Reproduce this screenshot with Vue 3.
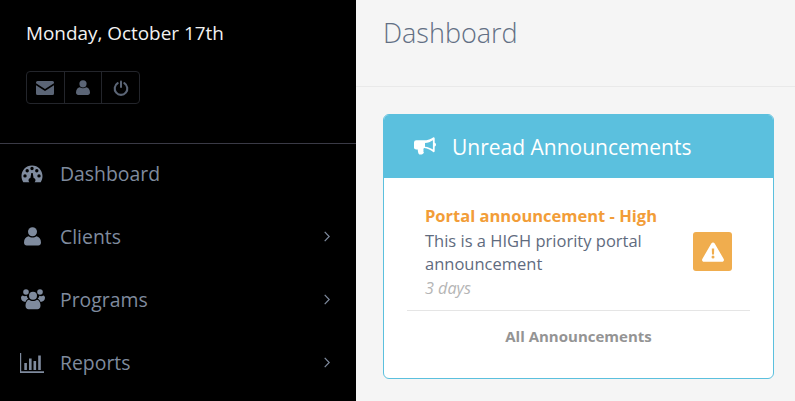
<script setup>
const nav = [
  { label: 'Dashboard', icon: 'gauge', arrow: false },
  { label: 'Clients', icon: 'user', arrow: true },
  { label: 'Programs', icon: 'users', arrow: true },
  { label: 'Reports', icon: 'chart', arrow: true },
]
</script>

<template>
  <div class="layout">
    <aside class="sidebar">
      <div class="profile">
        <div class="date">Monday, October 17th</div>
        <div class="btn-group">
          <button class="tool">
            <svg width="18" height="14" viewBox="0 0 18 14"><path d="M1.500 0h15A1.500 1.500 0 0 1 18 1.500v.8L9 8 0 2.300v-.8A1.500 1.500 0 0 1 1.500 0z"/><path d="M0 4.200 9 10l9-5.800v8.300a1.500 1.500 0 0 1-1.500 1.500h-15A1.500 1.500 0 0 1 0 12.500z"/></svg>
          </button>
          <button class="tool">
            <svg width="14" height="15" viewBox="0 0 14 15"><circle cx="7" cy="3.800" r="3.600"/><path d="M0 12.500C0 9.500 1.800 7.600 3.800 7.300 5.500 8.500 8.500 8.500 10.200 7.300 12.200 7.600 14 9.500 14 12.500 14 14 13 15 11.800 15H2.200C1 15 0 14 0 12.500z"/></svg>
          </button>
          <button class="tool">
            <svg width="16" height="16" viewBox="0 0 16 16"><path d="M4.700 3.200a6.300 6.300 0 1 0 6.600 0" fill="none" stroke-width="2.100" stroke-linecap="round" class="ring"/><rect x="7" y="0.500" width="2" height="7.500" rx="1"/></svg>
          </button>
        </div>
      </div>

      <nav class="menu">
        <a v-for="item in nav" :key="item.label" class="menu-item">
          <span class="menu-icon">
            <svg v-if="item.icon === 'gauge'" class="icon-gauge" width="22" height="18" viewBox="0 0 22 18">
              <path fill-rule="evenodd" d="M11 0.500C5 0.500 0.500 5.200 0.500 11c0 2.300.6 4.300 1.800 6.200h6.200c-.8-.6-1.100-1.500-.9-2.400.2-.9.9-1.500 1.800-1.700L10.300 8h1.400l.9 5.100c.9.200 1.600.8 1.800 1.700.2.900-.1 1.800-.9 2.400h6.200c1.200-1.900 1.800-3.900 1.800-6.200C21.500 5.200 17 .5 11 .5zM4 12.600a1.700 1.700 0 1 1 0-3.400 1.700 1.700 0 0 1 0 3.400zm2.200-5.200a1.700 1.700 0 1 1 0-3.400 1.700 1.700 0 0 1 0 3.400zM11 5.200a1.700 1.700 0 1 1 0-3.400 1.700 1.700 0 0 1 0 3.400zm4.800 2.200a1.700 1.700 0 1 1 0-3.400 1.700 1.700 0 0 1 0 3.400zm2.200 5.200a1.700 1.700 0 1 1 0-3.400 1.700 1.700 0 0 1 0 3.400z"/>
            </svg>
            <svg v-else-if="item.icon === 'user'" width="17" height="19" viewBox="0 0 17 19" class="icon-user">
              <circle cx="8.500" cy="4.700" r="4.500"/>
              <path d="M0 15.500C0 12 2 9.700 4.500 9.300c2.200 1.600 5.800 1.600 8 0C15 9.700 17 12 17 15.500 17 17.500 15.800 18.500 14.300 18.500H2.700C1.200 18.500 0 17.500 0 15.500z"/>
            </svg>
            <svg v-else-if="item.icon === 'users'" class="icon-users" width="24" height="21" viewBox="0 0 24 21">
              <circle cx="5" cy="3" r="2.800"/><circle cx="19" cy="3" r="2.800"/>
              <circle cx="12" cy="6.800" r="4"/>
              <path d="M0 8.800c0-1.500.8-2.400 1.700-2.400 1 .8 2.600 1 3.900.4.300 1.200.9 2.200 1.700 3-1.300.6-2.400 1.700-2.900 3.200C2 12.800 0 11.500 0 8.800z"/>
              <path d="M24 8.800c0-1.500-.8-2.400-1.700-2.400-1 .8-2.600 1-3.900.4-.3 1.200-.9 2.200-1.700 3 1.300.6 2.400 1.700 2.900 3.200 2.400-.2 4.400-1.500 4.400-4.200z"/>
              <path d="M4.500 16.500c0-3 1.500-5.500 3.500-5.800 2.200 1.800 5.800 1.800 8 0 2 .3 3.500 2.800 3.500 5.800 0 2.500-1.400 3.800-3 3.800H7.500c-1.600 0-3-1.300-3-3.800z"/>
            </svg>
            <svg v-else width="24" height="20" viewBox="0 0 24 20">
              <path d="M0 0h1.200v18.300H24V20H0z"/>
              <rect x="4.300" y="10" width="2.600" height="7"/>
              <rect x="9" y="5.500" width="2.600" height="11.500"/>
              <rect x="13.500" y="8" width="2.600" height="9"/>
              <rect x="18.200" y="2.500" width="2.600" height="14.500"/>
            </svg>
          </span>
          <span class="menu-label">{{ item.label }}</span>
          <svg v-if="item.arrow" class="chevron" width="6" height="11" viewBox="0 0 6 11"><path d="M.7.8 5.200 5.500.7 10.200" fill="none" stroke-width="1.200"/></svg>
        </a>
      </nav>
    </aside>

    <main class="content">
      <header class="page-header">
        <h1>Dashboard</h1>
      </header>
      <div class="page-body">
        <section class="panel">
          <div class="panel-heading">
            <svg width="22" height="19" viewBox="0 0 22 19">
              <path fill-rule="evenodd" d="M19.500 0.200c.8 0 1.200.7 1.200 1.300v4.300c.8.400 1.300 1.100 1.300 1.900s-.5 1.500-1.300 1.900v4.400c0 .8-.6 1.300-1.200 1.300-2.500-2.300-5.800-3.900-9.300-4.300-.8.300-1 1.400-.6 2.200-.5.800-.2 1.400.3 2.200-.4 1-1.300 1.700-2.300 2-.9.300-2.400.3-2.900-.4-.5-1.300-1-2.800-1-4.500H2.200A2.200 2.200 0 0 1 0 10V5.500a2.200 2.200 0 0 1 2.200-2.200h7.300c4 0 7.500-1 10-3.100zM18.900 3.200c-2.300 1.700-5 2.500-7.900 2.800v3.800c2.900.3 5.600 1.100 7.900 2.800z"/>
            </svg>
            <span>Unread Announcements</span>
          </div>
          <div class="panel-body">
            <div class="notice">
              <div class="notice-text">
                <div class="notice-title">Portal announcement - High</div>
                <div class="notice-msg">This is a HIGH priority portal announcement</div>
                <div class="notice-time">3 days</div>
              </div>
              <div class="notice-badge">
                <svg width="22" height="20" viewBox="0 0 22 20">
                  <path fill-rule="evenodd" d="M11 0.500c.7 0 1.300.4 1.700 1l9 15.500c.7 1.300-.2 2.800-1.700 2.800H2c-1.500 0-2.400-1.500-1.700-2.800l9-15.500c.4-.6 1-1 1.700-1zM9.800 6.500l.2 6h2l.2-6zM11 13.600a1.500 1.500 0 1 0 0 3 1.500 1.500 0 0 0 0-3z"/>
                </svg>
              </div>
            </div>
            <div class="all-link">All Announcements</div>
          </div>
        </section>
      </div>
    </main>
  </div>
</template>

<style scoped>
.layout {
  display: flex;
  width: 795px;
  height: 401px;
  overflow: hidden;
  font-family: "Open Sans", "Liberation Sans", sans-serif;
}
.sidebar {
  width: 356px;
  flex: none;
  background: #000;
}
.profile {
  padding: 21px 26px 0;
  box-sizing: border-box;
  border-bottom: 1px solid #3a3a46;
  height: 144px;
}
.date {
  color: #f2f2f2;
  font-size: 18.9px;
  line-height: 25px;
}
.btn-group {
  display: inline-flex;
  width: 114px;
  margin-top: 25px;
  height: 33px;
  box-sizing: border-box;
  border: 1px solid #23252b;
  border-radius: 4px;
}
.tool {
  flex: 1;
  padding: 0;
  background: none;
  border: 0;
  border-left: 1px solid #23252b;
  display: flex;
  align-items: center;
  justify-content: center;
}
.tool:first-child { border-left: 0; }
.tool svg { fill: #5b6576; stroke: #5b6576; stroke-width: 0; }
.tool svg .ring { stroke-width: 2.1; fill: none; }
.menu {
  display: flex;
  flex-direction: column;
  margin-top: -2px;
}
.menu-item {
  display: flex;
  align-items: center;
  height: 63px;
  padding: 0 26px 0 20px;
  color: #7f8b9e;
  font-size: 19.4px;
}
.menu-icon {
  width: 40px;
  flex: none;
  display: flex;
  align-items: center;
}
.menu-icon svg { fill: #7f8b9e; }
.menu-icon .icon-gauge { margin-left: 1px; }
.menu-icon .icon-user { margin-left: 3.500px; }
.menu-icon .icon-users { margin-left: 0.500px; }
.menu-label { flex: 1; }
.chevron { stroke: #7f8b9e; }
.content {
  flex: 1;
  background: #f5f5f5;
}
.page-header {
  height: 87px;
  box-sizing: border-box;
  border-bottom: 1px solid #e9e9e9;
  padding: 13px 27px 0;
}
.page-header h1 {
  margin: 0;
  font-size: 27px;
  font-weight: 300;
  line-height: 40px;
  color: #626f84;
}
.page-body {
  padding: 27px 21px 0 27px;
}
.panel {
  height: 265px;
  box-sizing: border-box;
  border: 1px solid #5bc0de;
  border-radius: 6px;
  background: #fff;
  overflow: hidden;
}
.panel-heading {
  height: 63px;
  background: #5bc0de;
  display: flex;
  align-items: center;
  padding-left: 30px;
  color: #fff;
  font-size: 21px;
}
.panel-heading svg { fill: #fff; margin-right: 16px; }
.panel-body {
  padding: 25px 23px 0;
}
.notice {
  display: flex;
  align-items: center;
  padding: 0 18px 10px;
  border-bottom: 1px solid #e5e5e5;
}
.notice-text { flex: 1; }
.notice-title {
  color: #f29d38;
  font-size: 16.5px;
  font-weight: 700;
  line-height: 25px;
  margin-bottom: 1px;
}
.notice-msg {
  color: #5f6b7e;
  font-size: 16.5px;
  line-height: 23px;
  width: 240px;
}
.notice-time {
  color: #b5b5b5;
  font-size: 16.2px;
  font-style: italic;
  line-height: 23px;
  margin-top: 2px;
}
.notice-badge {
  width: 39px;
  height: 39px;
  flex: none;
  background: #f0ad4e;
  border-radius: 3px;
  display: flex;
  align-items: center;
  justify-content: center;
}
.notice-badge svg { fill: #fff; }
.all-link {
  text-align: center;
  color: #949494;
  font-size: 15px;
  font-weight: 700;
  margin-top: 15px;
}
</style>
